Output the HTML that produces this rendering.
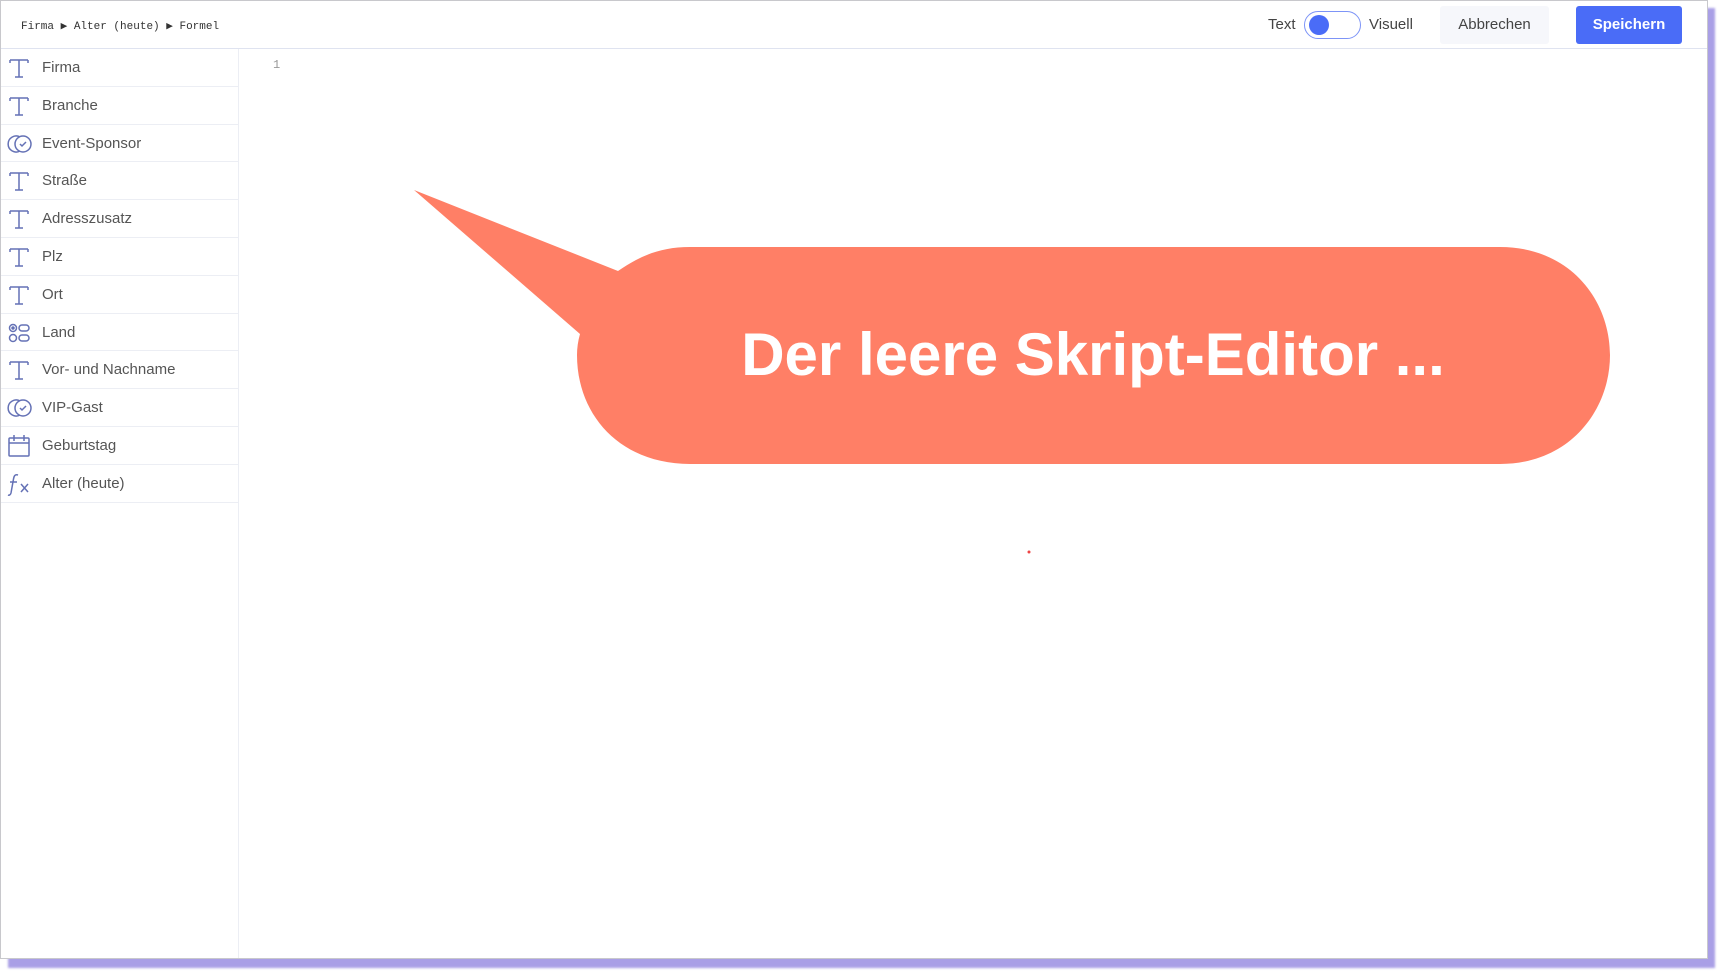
<!DOCTYPE html>
<html><head><meta charset="utf-8"><style>
*{margin:0;padding:0;box-sizing:border-box}
body{width:1720px;height:973px;background:#fff;position:relative;overflow:hidden;font-family:"Liberation Sans",sans-serif}
.shadow{position:absolute;left:8px;top:8px;width:1707px;height:960px;background:#a99fe6;filter:blur(1px)}
.frame{position:absolute;left:0;top:0;width:1708px;height:959px;background:#fff;border:1px solid #c8c8cc}
.hdr{position:absolute;left:0;top:0;width:100%;height:48px;border-bottom:1px solid #dfe3f0}
.bc{position:absolute;left:20px;top:18px;font-family:"Liberation Mono",monospace;font-size:11px;color:#333}
.side{position:absolute;left:0;top:48px;width:238px;bottom:0;border-right:1px solid #eceef4}
.row{height:37.8px;border-bottom:1px solid #eceef4;position:relative;font-size:15px;color:#555;line-height:37px;padding-left:41px}
.row svg{position:absolute;left:5px;top:7px}
.btn{position:absolute;top:5px;height:38px;border-radius:3px;font-size:15px;line-height:38px;text-align:center}
</style></head><body>
<div class="shadow"></div>
<div class="frame">
<div class="hdr">
<div class="bc">Firma ▶ Alter (heute) ▶ Formel</div>
<div style="position:absolute;left:1267px;top:15px;font-size:15px;color:#444">Text</div>
<div style="position:absolute;left:1303px;top:10px;width:57px;height:28px;border:1.5px solid #7d94f7;border-radius:14px"><div style="position:absolute;left:4px;top:3px;width:20px;height:20px;border-radius:50%;background:#4a6cf7"></div></div>
<div style="position:absolute;left:1368px;top:15px;font-size:15px;color:#444">Visuell</div>
<div class="btn" style="left:1439px;width:109px;background:#f6f7fb;color:#444">Abbrechen</div>
<div class="btn" style="left:1575px;width:106px;background:#4a6cf7;color:#fff;font-weight:bold">Speichern</div>
</div>
<div class="side">
<div class="row"><svg width="26" height="24" viewBox="0 0 26 24" fill="none" stroke="#6471b5" stroke-width="1.5"><path d="M4 4h18M4 4v3M22 4v3M13 4v17M9 21h8"/></svg>Firma</div>
<div class="row"><svg width="26" height="24" viewBox="0 0 26 24" fill="none" stroke="#6471b5" stroke-width="1.5"><path d="M4 4h18M4 4v3M22 4v3M13 4v17M9 21h8"/></svg>Branche</div>
<div class="row"><svg width="28" height="24" viewBox="0 0 28 24" fill="none" stroke="#6471b5" stroke-width="1.5"><path d="M14 19a8 8 0 1 1 0-14"/><circle cx="17" cy="12" r="8"/><path d="M14 12l2 2 4-4"/></svg>Event-Sponsor</div>
<div class="row"><svg width="26" height="24" viewBox="0 0 26 24" fill="none" stroke="#6471b5" stroke-width="1.5"><path d="M4 4h18M4 4v3M22 4v3M13 4v17M9 21h8"/></svg>Straße</div>
<div class="row"><svg width="26" height="24" viewBox="0 0 26 24" fill="none" stroke="#6471b5" stroke-width="1.5"><path d="M4 4h18M4 4v3M22 4v3M13 4v17M9 21h8"/></svg>Adresszusatz</div>
<div class="row"><svg width="26" height="24" viewBox="0 0 26 24" fill="none" stroke="#6471b5" stroke-width="1.5"><path d="M4 4h18M4 4v3M22 4v3M13 4v17M9 21h8"/></svg>Plz</div>
<div class="row"><svg width="26" height="24" viewBox="0 0 26 24" fill="none" stroke="#6471b5" stroke-width="1.5"><path d="M4 4h18M4 4v3M22 4v3M13 4v17M9 21h8"/></svg>Ort</div>
<div class="row"><svg width="28" height="24" viewBox="0 0 28 24" fill="none" stroke="#6471b5" stroke-width="1.5"><circle cx="7" cy="7" r="3.5"/><circle cx="7" cy="7" r="1" fill="#6471b5"/><circle cx="7" cy="17" r="3.5"/><rect x="13" y="4" width="10" height="6" rx="3"/><rect x="13" y="14" width="10" height="6" rx="3"/></svg>Land</div>
<div class="row"><svg width="26" height="24" viewBox="0 0 26 24" fill="none" stroke="#6471b5" stroke-width="1.5"><path d="M4 4h18M4 4v3M22 4v3M13 4v17M9 21h8"/></svg>Vor- und Nachname</div>
<div class="row"><svg width="28" height="24" viewBox="0 0 28 24" fill="none" stroke="#6471b5" stroke-width="1.5"><path d="M14 19a8 8 0 1 1 0-14"/><circle cx="17" cy="12" r="8"/><path d="M14 12l2 2 4-4"/></svg>VIP-Gast</div>
<div class="row"><svg width="26" height="24" viewBox="0 0 26 24" fill="none" stroke="#6471b5" stroke-width="1.5"><rect x="3" y="4" width="20" height="18" rx="1"/><path d="M3 9h20M8 1v6M18 1v6"/></svg>Geburtstag</div>
<div class="row"><svg width="28" height="24" viewBox="0 0 28 24" fill="none" stroke="#6471b5" stroke-width="1.5"><path d="M12 3c-3-1-4 1-4.5 4L5 21c-.5 2-2 2.5-3 2M4 10h7M15 12l7 8M22 12l-7 8"/></svg>Alter (heute)</div>
</div>
<div style="position:absolute;left:272px;top:57px;font-family:'Liberation Mono',monospace;font-size:12px;color:#999">1</div>
</div>
<svg style="position:absolute;left:0;top:0" width="1720" height="973">
<path d="M414 190 L618 271 C640 256 660 247 690 247 L1500 247 C1570 247 1610 300 1610 355 C1610 410 1570 464 1500 464 L690 464 C620 464 577 415 577 355 C577 348 578 341 580 334 Z" fill="#ff7f66"/>
<circle cx="1029" cy="552" r="1.5" fill="#e44"/>
</svg>
<div style="position:absolute;left:593px;width:1000px;top:320px;text-align:center;color:#fff;font-weight:bold;font-size:60px;line-height:70px">Der leere Skript-Editor ...</div>
</body></html>
